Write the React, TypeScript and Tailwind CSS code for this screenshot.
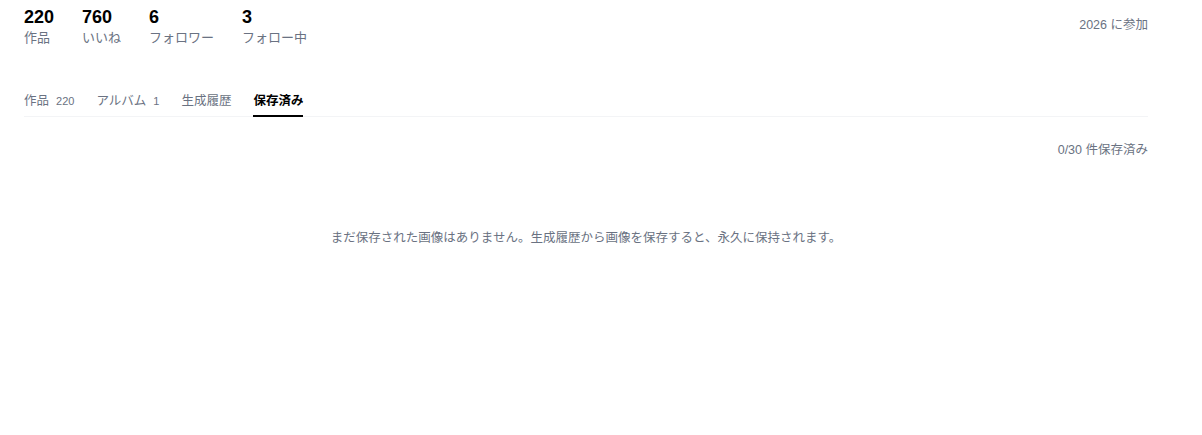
const stats = [
  { value: "220", label: "作品" },
  { value: "760", label: "いいね" },
  { value: "6", label: "フォロワー" },
  { value: "3", label: "フォロー中" },
];

const tabs = [
  { label: "作品", count: "220" },
  { label: "アルバム", count: "1" },
  { label: "生成履歴" },
  { label: "保存済み", active: true },
];

export default function App() {
  return (
    <div className="min-h-screen bg-white font-['Liberation_Sans','Noto_Sans_CJK_JP',sans-serif]">
      <div className="w-[1124px] ml-6">
        <div className="flex items-start justify-between pt-[6px]">
          <div className="flex gap-7">
            {stats.map((s) => (
              <div key={s.label} className="flex flex-col">
                <span className="text-[18px] leading-[23px] font-bold text-black">
                  {s.value}
                </span>
                <span className="text-[13px] leading-[18px] text-gray-500">
                  {s.label}
                </span>
              </div>
            ))}
          </div>
          <span className="text-[12.5px] text-gray-500 mt-[10px]">2026 に参加</span>
        </div>

        <nav className="mt-[45px] flex gap-[22px] border-b border-gray-100">
          {tabs.map((t) => (
            <div
              key={t.label}
              className={`flex items-baseline gap-[7px] pb-[4px] border-b-2 -mb-px ${
                t.active ? "border-black text-black font-bold" : "border-transparent text-gray-500"
              }`}
            >
              <span className="text-[12.5px]">{t.label}</span>
              {t.count && <span className="text-[11px]">{t.count}</span>}
            </div>
          ))}
        </nav>

        <div className="flex justify-end mt-[24px]">
          <span className="text-[12.5px] text-gray-500">0/30 件保存済み</span>
        </div>

        <p className="mt-[69px] text-center text-[12.5px] text-gray-500">
          まだ保存された画像はありません。生成履歴から画像を保存すると、永久に保持されます。
        </p>
      </div>
    </div>
  );
}
